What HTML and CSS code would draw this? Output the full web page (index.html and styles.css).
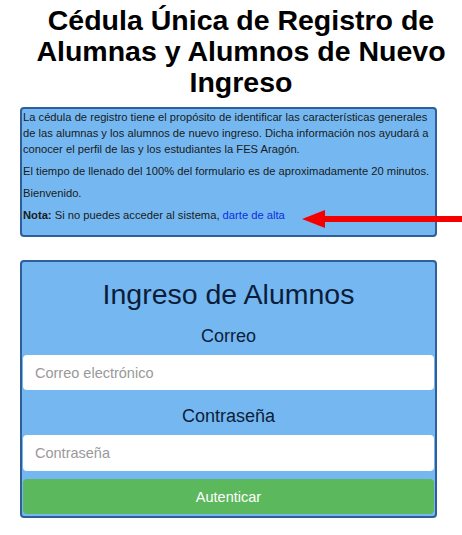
FILE: index.html
```html
<!DOCTYPE html>
<html lang="es">
<head>
<meta charset="utf-8">
<title>Cédula Única de Registro</title>
<link rel="stylesheet" href="styles.css">
</head>
<body>
<div class="page">
  <h1 class="title">Cédula Única de Registro de Alumnas y Alumnos de Nuevo Ingreso</h1>
  <div class="info">
    <p>La cédula de registro tiene el propósito de identificar las características generales de las alumnas y los alumnos de nuevo ingreso. Dicha información nos ayudará a conocer el perfil de las y los estudiantes la FES Aragón.</p>
    <p>El tiempo de llenado del 100% del formulario es de aproximadamente 20 minutos.</p>
    <p>Bienvenido.</p>
    <p><b>Nota:</b> Si no puedes acceder al sistema, <a href="#" class="link">darte de alta</a></p>
    <svg class="arrow" width="162" height="22" viewBox="0 0 162 22" aria-hidden="true">
      <polygon points="0,11 23,2 23,8 162,8 162,14 23,14 23,20" fill="#f40000"/>
    </svg>
  </div>
  <form class="login">
    <h2 class="login-title">Ingreso de Alumnos</h2>
    <label class="label" for="correo">Correo</label>
    <input class="field" id="correo" type="email" placeholder="Correo electrónico">
    <label class="label" for="pass">Contraseña</label>
    <input class="field" id="pass" type="password" placeholder="Contraseña">
    <button class="btn" type="button">Autenticar</button>
  </form>
</div>
</body>
</html>
```

FILE: styles.css
```css
* { box-sizing: border-box; }
html, body { margin: 0; padding: 0; background: #fff; }
body { font-family: "Liberation Sans", Arial, sans-serif; color: #000; overflow: hidden; }
.page { width: 462px; padding: 5px 0 0 20px; }
.title {
  width: 442px;
  margin: 0 0 9px 0;
  text-align: center;
  font-size: 28.5px;
  line-height: 31px;
  font-weight: bold;
  color: #000;
}
.info {
  position: relative;
  width: 417px;
  height: 130px;
  background: #75b8f1;
  border: 2px solid #2e5f9a;
  border-radius: 4px;
  padding: 0 1px 0 1px;
  font-size: 11.2px;
  line-height: 16px;
  color: #1a1a1a;
}
.info p { margin: 0 0 6px 0; }
.link { color: #0b2ee0; text-decoration: none; }
.arrow { position: absolute; left: 280px; top: 99px; }
.login {
  margin-top: 23px;
  width: 417px;
  height: 258px;
  background: #75b8f1;
  border: 2px solid #2e5f9a;
  border-radius: 4px;
  padding: 14px 1px 1px 1px;
  display: flex;
  flex-direction: column;
  align-items: stretch;
}
.login-title {
  margin: 0 0 12px 0;
  text-align: center;
  font-size: 28.5px;
  line-height: 36px;
  font-weight: normal;
  color: #0c1d3a;
}
.label {
  text-align: center;
  font-size: 18px;
  line-height: 24px;
  color: #0c1d3a;
  margin-bottom: 7px;
}
.field {
  height: 35px;
  border: none;
  border-radius: 4px;
  background: #fff;
  padding: 0 12px;
  font-family: "Liberation Sans", Arial, sans-serif;
  font-size: 14.5px;
  color: #333;
  margin-bottom: 14px;
  outline: none;
}
.field::placeholder { color: #999; }
#pass { height: 36px; margin-bottom: 8px; }
.btn {
  height: 35px;
  border: none;
  border-radius: 4px;
  background: #5cb85c;
  color: #fff;
  font-family: "Liberation Sans", Arial, sans-serif;
  font-size: 14.5px;
}
```
